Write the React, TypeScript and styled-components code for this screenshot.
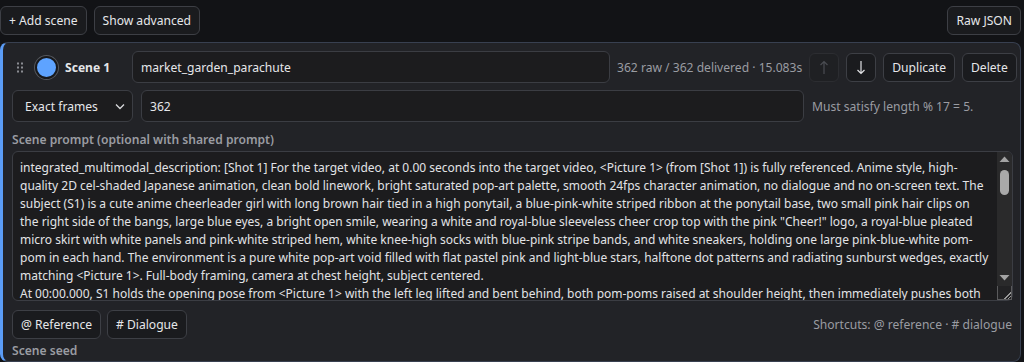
import React from "react";
import styled, { createGlobalStyle } from "styled-components";

const Global = createGlobalStyle`
  html, body { margin: 0; padding: 0; background: #121316; color-scheme: dark; }
  body { font-family: "Noto Sans", "Open Sans", sans-serif; font-size: 12px; color: #e4e5e8; overflow: hidden; }
  * { box-sizing: border-box; }
`;

const FS = "12.1px";

const Page = styled.div`
  display: flex;
  flex-direction: column;
  gap: 7px;
  padding: 6px 3px 0 0;
  width: 1024px;
  height: 362px;
  overflow: hidden;
`;

const Toolbar = styled.div`
  display: flex;
  align-items: center;
  gap: 7px;
`;

const Spacer = styled.div`
  flex: 1;
`;

const Button = styled.button<{ $disabled?: boolean }>`
  height: 29px;
  padding: 0 8px;
  border-radius: 6px;
  border: 1px solid ${(p) => (p.$disabled ? "#2c2d31" : "#3d3f45")};
  background: ${(p) => (p.$disabled ? "#1f2023" : "#1a1b1e")};
  color: ${(p) => (p.$disabled ? "#4d4f55" : "#e6e7ea")};
  font-family: inherit;
  font-size: ${FS};
  white-space: nowrap;
  display: inline-flex;
  align-items: center;
  justify-content: center;
  flex: none;
`;

const IconButton = styled(Button)`
  width: 30px;
  padding: 0;
`;

const Card = styled.div`
  background: #222327;
  border: 1px solid #384050;
  border-left: 3px solid #5b9cf6;
  border-radius: 8px;
  padding: 8px 8px 0 9px;
  display: flex;
  flex-direction: column;
  flex: 1;
`;

const Row = styled.div<{ $top?: number; $gap?: number }>`
  display: flex;
  align-items: center;
  gap: ${(p) => p.$gap ?? 7}px;
  margin-top: ${(p) => p.$top ?? 0}px;
`;

const Handle = styled.svg`
  margin-left: 5px;
  flex: none;
`;

const ColorDot = styled.span`
  width: 23px;
  height: 23px;
  border-radius: 50%;
  background: #5ea3ff;
  border: 2px solid #17181b;
  box-shadow: 0 0 0 1px #55575d;
  margin-left: 4px;
  flex: none;
`;

const SceneName = styled.span`
  font-weight: 700;
  font-size: ${FS};
  width: 60px;
  white-space: nowrap;
  flex: none;
`;

const Input = styled.input<{ $width: number }>`
  height: 32px;
  border-radius: 6px;
  border: 1px solid #3b3d43;
  background: #1c1c1e;
  color: #e6e7ea;
  font-family: inherit;
  font-size: ${FS};
  padding: 0 8px;
  width: ${(p) => p.$width}px;
  flex: none;
  outline: none;
`;

const Hint = styled.span<{ $grow?: boolean }>`
  color: #9a9ca2;
  font-size: ${FS};
  white-space: nowrap;
  flex: ${(p) => (p.$grow ? 1 : "none")};
`;

const SelectBox = styled.div`
  width: 121px;
  height: 32px;
  flex: none;
  border-radius: 6px;
  border: 1px solid #3b3d43;
  background: #1c1c1e;
  display: flex;
  align-items: center;
  padding: 0 6px 0 12px;
  font-size: ${FS};
  color: #e6e7ea;
  justify-content: space-between;
`;

const Label = styled.div<{ $top: number }>`
  color: #9a9ca2;
  font-size: ${FS};
  font-weight: 600;
  line-height: 18px;
  margin-top: ${(p) => p.$top}px;
`;

const EditorWrap = styled.div`
  position: relative;
  width: 1001px;
  height: 150px;
  margin-top: 2px;
`;

const TextArea = styled.textarea`
  display: block;
  width: 100%;
  height: 100%;
  border-radius: 6px;
  border: 1px solid #3b3d43;
  background: #1c1c1e;
  color: #e2e3e6;
  font-family: inherit;
  font-size: 12px;
  line-height: 18px;
  padding: 7px 22px 0 7px;
  resize: vertical;
  outline: none;
  overflow: hidden;

  &::-webkit-resizer {
    background-color: #222224;
    border: 1px solid #5a5a5c;
    background-image: linear-gradient(
      135deg,
      transparent 72%,
      #9a9a9a 72%,
      #9a9a9a 78%,
      transparent 78%,
      transparent 86%,
      #9a9a9a 86%,
      #9a9a9a 92%,
      transparent 92%
    );
  }
`;

const ScrollTrack = styled.div`
  position: absolute;
  top: 1px;
  right: 1px;
  bottom: 15px;
  width: 15px;
  background: #2a2a2b;
  border-top-right-radius: 5px;
  display: flex;
  flex-direction: column;
  align-items: center;
  pointer-events: none;
`;

const ScrollArrow = styled.svg`
  flex: none;
  display: block;
`;

const ScrollThumb = styled.div`
  width: 9px;
  height: 25px;
  margin-top: 3px;
  border-radius: 5px;
  background: #a9a9a9;
`;

const Footer = styled.div`
  display: flex;
  align-items: center;
  gap: 6px;
  margin-top: 9px;
`;

const ArrowIcon = ({ down, color }: { down?: boolean; color: string }) => (
  <svg width="10" height="15" viewBox="0 0 10 15" style={{ transform: down ? "rotate(180deg)" : undefined }}>
    <path d="M5 1.5 V14 M1.5 5 L5 1.5 L8.5 5" fill="none" stroke={color} strokeWidth="1.2" />
  </svg>
);

const prompt = `integrated_multimodal_description: [Shot 1] For the target video, at 0.00 seconds into the target video, <Picture 1> (from [Shot 1]) is fully referenced. Anime style, high-quality 2D cel-shaded Japanese animation, clean bold linework, bright saturated pop-art palette, smooth 24fps character animation, no dialogue and no on-screen text. The subject (S1) is a cute anime cheerleader girl with long brown hair tied in a high ponytail, a blue-pink-white striped ribbon at the ponytail base, two small pink hair clips on the right side of the bangs, large blue eyes, a bright open smile, wearing a white and royal-blue sleeveless cheer crop top with the pink "Cheer!" logo, a royal-blue pleated micro skirt with white panels and pink-white striped hem, white knee-high socks with blue-pink stripe bands, and white sneakers, holding one large pink-blue-white pom-pom in each hand. The environment is a pure white pop-art void filled with flat pastel pink and light-blue stars, halftone dot patterns and radiating sunburst wedges, exactly matching <Picture 1>. Full-body framing, camera at chest height, subject centered.
At 00:00.000, S1 holds the opening pose from <Picture 1> with the left leg lifted and bent behind, both pom-poms raised at shoulder height, then immediately pushes both pom-poms upward.`;

export default function App() {
  return (
    <>
      <Global />
      <Page>
        <Toolbar>
          <Button>+ Add scene</Button>
          <Button>Show advanced</Button>
          <Spacer />
          <Button>Raw JSON</Button>
        </Toolbar>
        <Card>
          <Row>
            <Handle width="7" height="11" viewBox="0 0 7 11">
              {[0, 4].map((x) =>
                [0.5, 4.5, 8.5].map((y) => <rect key={`${x}-${y}`} x={x} y={y} width="2" height="2" fill="#8a8c92" />)
              )}
            </Handle>
            <ColorDot />
            <SceneName>Scene 1</SceneName>
            <Input $width={478} defaultValue="market_garden_parachute" />
            <Hint $grow>362 raw / 362 delivered · 15.083s</Hint>
            <IconButton $disabled>
              <ArrowIcon color="#4a4c52" />
            </IconButton>
            <IconButton>
              <ArrowIcon down color="#e0e1e4" />
            </IconButton>
            <Button>Duplicate</Button>
            <Button>Delete</Button>
          </Row>
          <Row $top={7} $gap={8}>
            <SelectBox>
              <span>Exact frames</span>
              <svg width="12" height="12" viewBox="0 0 12 12">
                <path d="M2 4.5 L6 8.5 L10 4.5" fill="none" stroke="#d8d9dc" strokeWidth="1.3" />
              </svg>
            </SelectBox>
            <Input $width={663} defaultValue="362" />
            <Hint>Must satisfy length % 17 = 5.</Hint>
          </Row>
          <Label $top={9}>Scene prompt (optional with shared prompt)</Label>
          <EditorWrap>
            <TextArea defaultValue={prompt} />
            <ScrollTrack>
              <ScrollArrow width="15" height="15" viewBox="0 0 15 15">
                <polygon points="2.5,10 7.5,4.5 12.5,10" fill="#a3a3a3" />
              </ScrollArrow>
              <ScrollThumb />
              <Spacer />
              <ScrollArrow width="15" height="15" viewBox="0 0 15 15">
                <polygon points="2.5,4 7.5,9.5 12.5,4" fill="#a3a3a3" />
              </ScrollArrow>
            </ScrollTrack>
          </EditorWrap>
          <Footer>
            <Button>@ Reference</Button>
            <Button># Dialogue</Button>
            <Spacer />
            <Hint>Shortcuts: @ reference · # dialogue</Hint>
          </Footer>
          <Label $top={3}>Scene seed</Label>
        </Card>
      </Page>
    </>
  );
}
